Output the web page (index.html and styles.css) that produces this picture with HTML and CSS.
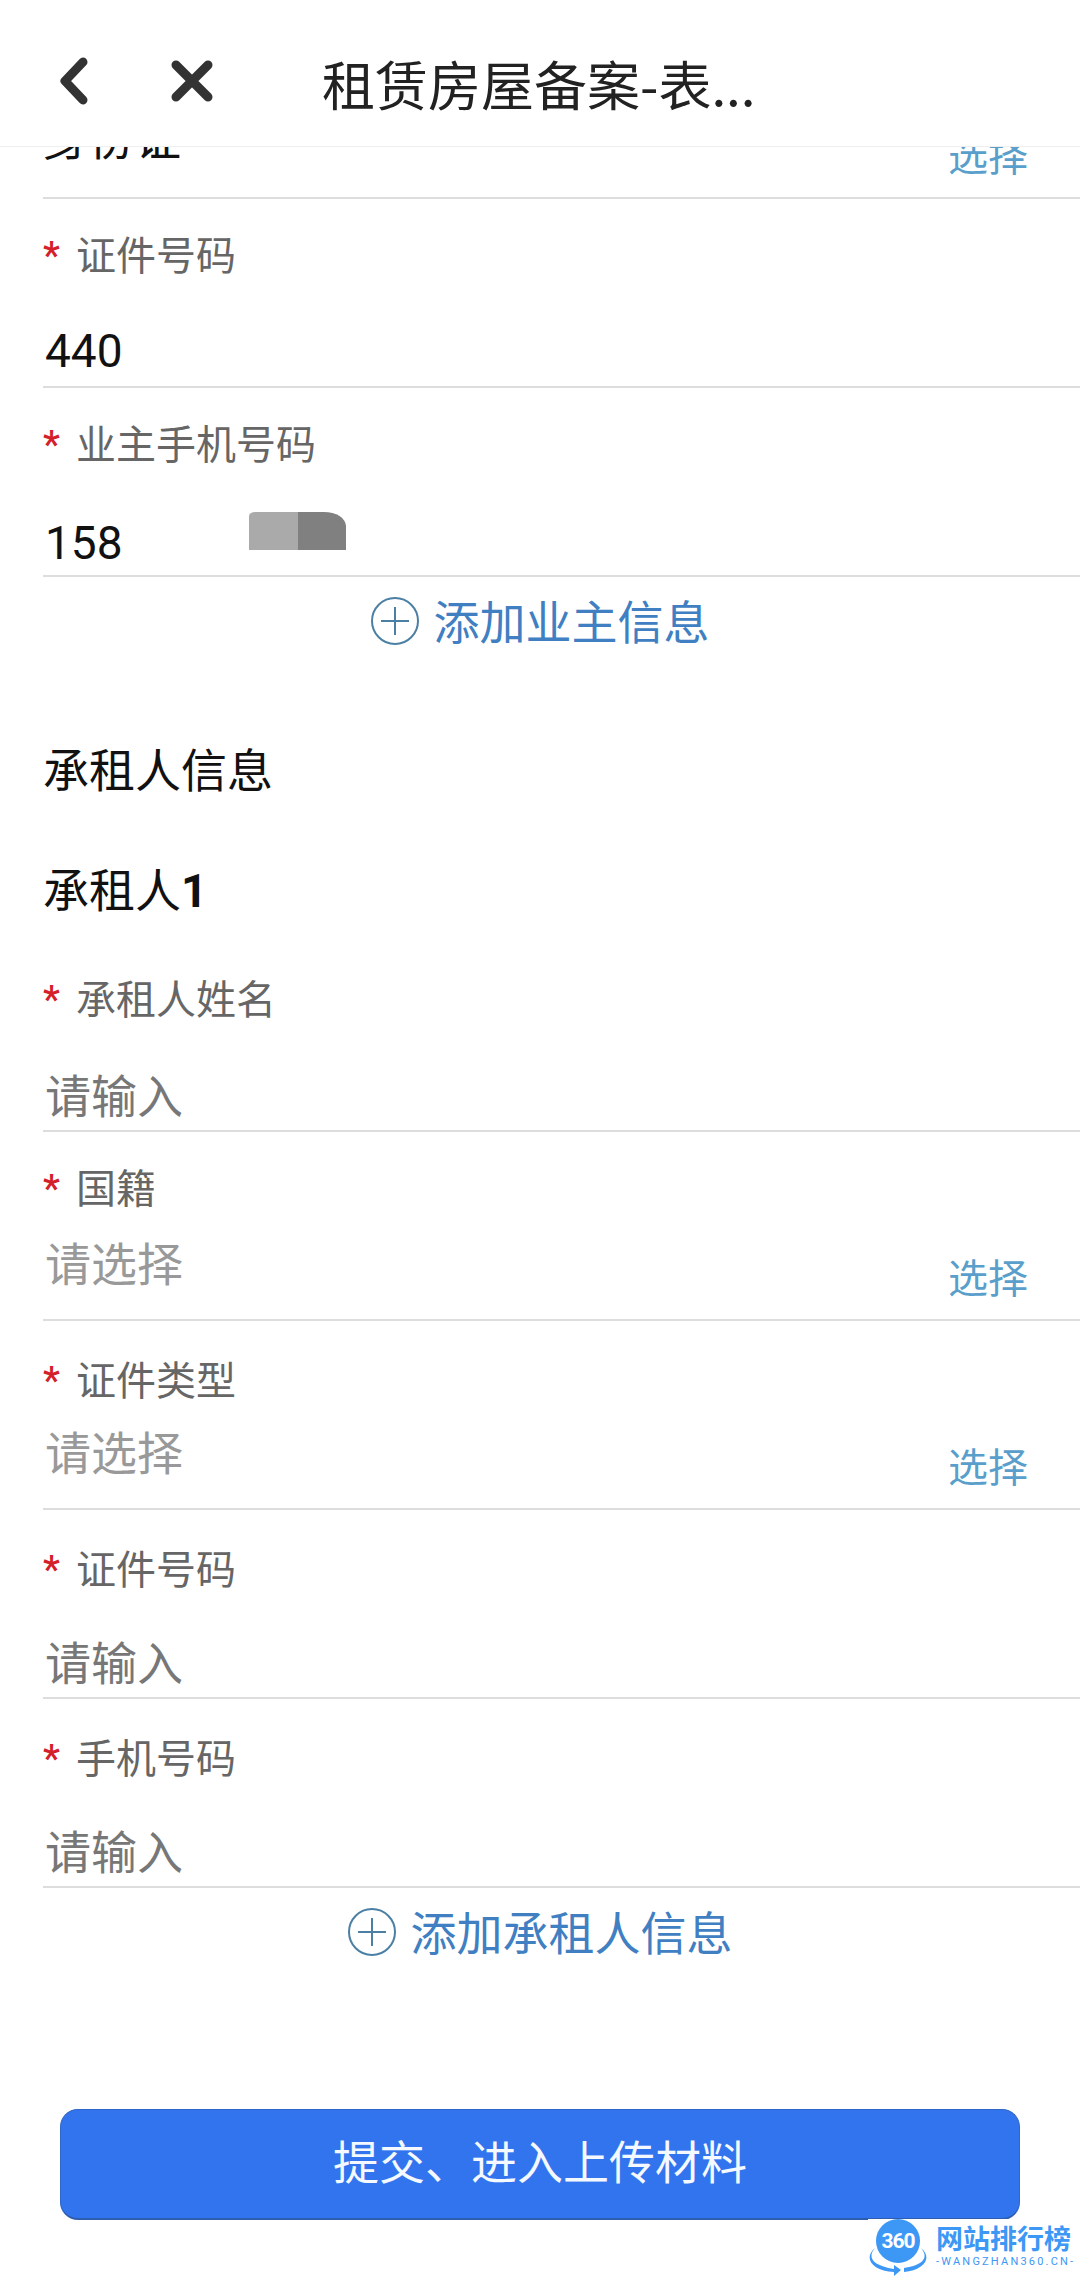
FILE: index.html
```html
<!DOCTYPE html>
<html lang="zh-CN">
    <head>
        <meta charset="utf-8">
        <meta name="viewport" content="width=device-width, initial-scale=1.0">
        <title>租赁房屋备案-表单</title>
        <link rel="stylesheet" href="styles.css">
    </head>
    <body>
        <header class="topbar">
            <svg class="back-icon" viewBox="0 0 32 48"><path d="M25 5 L7 24 L25 43"/></svg>
            <svg class="close-icon" viewBox="0 0 44 42"><path d="M6 5 L38 37 M38 5 L6 37"/></svg>
            <div class="title">租赁房屋备案-表...</div>
        </header>

        <main class="scroller">
            <div class="form">
                <div class="field">
                    <div class="label"></div>
                    <div class="select-row">
                        <div class="value">身份证</div>
                        <div class="choose">选择</div>
                    </div>
                </div>
                <div class="field">
                    <div class="label"><span class="star">*</span>证件号码</div>
                    <div class="value input-value">440</div>
                </div>
                <div class="field">
                    <div class="label"><span class="star">*</span>业主手机号码</div>
                    <div class="value input-value phone">158<span class="blur"></span></div>
                </div>
                <div class="add">
                    <svg class="plus-icon" viewBox="0 0 48 48"><circle cx="24" cy="24" r="23"/><path d="M10 24 H38 M24 10 V38"/></svg>
                    添加业主信息
                </div>

                <div class="section-title">承租人信息</div>
                <div class="sub-title">承租人<b>1</b></div>

                <div class="field">
                    <div class="label"><span class="star">*</span>承租人姓名</div>
                    <div class="value input-value placeholder-dark">请输入</div>
                </div>
                <div class="field">
                    <div class="label"><span class="star">*</span>国籍</div>
                    <div class="select-row">
                        <div class="value placeholder">请选择</div>
                        <div class="choose">选择</div>
                    </div>
                </div>
                <div class="field lower-label">
                    <div class="label"><span class="star">*</span>证件类型</div>
                    <div class="select-row">
                        <div class="value placeholder">请选择</div>
                        <div class="choose">选择</div>
                    </div>
                </div>
                <div class="field lower-label">
                    <div class="label"><span class="star">*</span>证件号码</div>
                    <div class="value input-value placeholder-dark">请输入</div>
                </div>
                <div class="field lower-label">
                    <div class="label"><span class="star">*</span>手机号码</div>
                    <div class="value input-value placeholder-dark">请输入</div>
                </div>
                <div class="add">
                    <svg class="plus-icon" viewBox="0 0 48 48"><circle cx="24" cy="24" r="23"/><path d="M10 24 H38 M24 10 V38"/></svg>
                    添加承租人信息
                </div>
            </div>
        </main>

        <button type="button" class="submit">提交、进入上传材料</button>

        <div class="watermark">
            <div class="logo">
                <span class="logo-num">360</span>
                <svg class="logo-swoosh" viewBox="0 0 60 30">
                    <path d="M7 1 C0 9 2 18 26 22 L26 18 L33 23 L26 29 L26 25 C4 24 -5 11 7 1 Z"/>
                    <path d="M53 1 C60 9 58 18 36 21 L36 25 C56 23 65 11 53 1 Z"/>
                </svg>
            </div>
            <div class="site">
                <div class="site-name">网站排行榜</div>
                <div class="site-url">-WANGZHAN360.CN-</div>
            </div>
        </div>
    </body>
</html>
```

FILE: styles.css
```css
* {
    box-sizing: border-box;
}

html, body {
    margin: 0;
    height: 2280px;
    overflow: hidden;
}

body {
    position: relative;
    display: flex;
    flex-direction: column;
    background-color: #fff;
    font-family: "Noto Sans CJK SC", "Noto Sans", sans-serif;
}

.topbar {
    flex: none;
    display: flex;
    align-items: center;
    height: 147px;
    padding-top: 16px;
    padding-left: 58px;
    border-bottom: 1px solid #eee;
}

.back-icon {
    width: 32px;
    height: 48px;
}

.close-icon {
    width: 44px;
    height: 42px;
    margin-left: 80px;
}

.back-icon path, .close-icon path {
    fill: none;
    stroke: #333;
    stroke-width: 9;
    stroke-linecap: round;
    stroke-linejoin: round;
}

.title {
    margin-left: 108px;
    margin-top: 3px;
    font-size: 53px;
    line-height: 60px;
    color: #222;
}

.scroller {
    flex: none;
    height: 1930px;
    overflow: hidden;
}

.form {
    margin-top: -137px;
}

.field {
    height: 189px;
    margin-left: 43px;
    padding-top: 34px;
    border-bottom: 2px solid #ddd;
}

.lower-label .label {
    position: relative;
    top: 3px;
}

.label {
    display: flex;
    height: 40px;
    line-height: 40px;
    font-size: 40px;
    color: #666;
}

.star {
    width: 33px;
    padding-top: 3px;
    font-family: "Roboto", sans-serif;
    font-weight: 500;
    font-size: 38px;
    color: #d3202a;
}

.select-row {
    display: flex;
    justify-content: space-between;
    margin-top: 30px;
}

.value {
    height: 50px;
    line-height: 50px;
    font-size: 46px;
    color: #111;
    font-family: "Roboto", "Noto Sans CJK SC", sans-serif;
}

.input-value {
    display: flex;
    margin-top: 53px;
    padding-left: 2px;
}

.phone {
    margin-top: 56px;
}

.placeholder {
    padding-left: 2px;
    color: #999;
    font-family: "Noto Sans CJK SC", sans-serif;
}

.placeholder-dark {
    margin-top: 51px;
    color: #777;
    font-family: "Noto Sans CJK SC", sans-serif;
}

.blur {
    width: 97px;
    height: 38px;
    margin-left: 126px;
    margin-top: -6px;
    border-radius: 6px 22px 0 0 / 4px 14px 0 0;
    background: linear-gradient(to right, #aaa 0, #aaa 50%, #808080 50%, #808080 100%);
}

.choose {
    margin-top: 15px;
    margin-right: 52px;
    line-height: 50px;
    font-size: 40px;
    color: #5a9fcb;
}

.add {
    display: flex;
    justify-content: center;
    align-items: center;
    gap: 15px;
    height: 92px;
    padding-bottom: 8px;
    font-size: 46px;
    color: #3f7fc2;
}

.plus-icon {
    width: 48px;
    height: 48px;
    margin-top: 4px;
}

.plus-icon circle, .plus-icon path {
    fill: none;
    stroke: #4b7fa3;
    stroke-width: 2;
}

.section-title {
    height: 76px;
    margin-top: 60px;
    margin-left: 43px;
    line-height: 76px;
    font-size: 46px;
    color: #111;
}

.sub-title {
    height: 76px;
    margin-top: 44px;
    margin-bottom: 18px;
    margin-left: 43px;
    line-height: 76px;
    font-size: 46px;
    color: #111;
}

.sub-title b {
    font-family: "Roboto", sans-serif;
}

.submit {
    flex: none;
    display: block;
    width: 960px;
    height: 111px;
    margin: 32px 0 0 60px;
    padding: 0 0 10px;
    border: 1px solid #2f66c8;
    border-bottom: 2px solid #2f5db0;
    border-radius: 18px;
    background-color: #3174ee;
    color: #f4f8ff;
    font-family: inherit;
    font-size: 46px;
}

.watermark {
    position: absolute;
    left: 868px;
    bottom: 0;
    display: flex;
    gap: 8px;
    width: 212px;
    height: 61px;
    background-color: #fff;
}

.logo {
    position: relative;
    width: 60px;
    height: 58px;
    flex: none;
}

.logo-num {
    position: absolute;
    left: 8px;
    top: 0;
    width: 44px;
    height: 44px;
    border-radius: 50%;
    background-color: #3d97f5;
    color: #fff;
    font-family: "Roboto", sans-serif;
    font-weight: 700;
    font-size: 21px;
    line-height: 44px;
    text-align: center;
    letter-spacing: -1px;
}

.logo-swoosh {
    position: absolute;
    left: 0;
    top: 28px;
    width: 60px;
    height: 30px;
}

.logo-swoosh path {
    fill: #3d97f5;
}

.site {
    margin-top: 3px;
    color: #3d97f5;
}

.site-name {
    height: 32px;
    line-height: 32px;
    font-size: 27px;
    font-weight: 700;
}

.site-url {
    height: 16px;
    line-height: 16px;
    font-family: "Roboto", sans-serif;
    font-size: 11px;
    letter-spacing: 2.2px;
    white-space: nowrap;
}
```
